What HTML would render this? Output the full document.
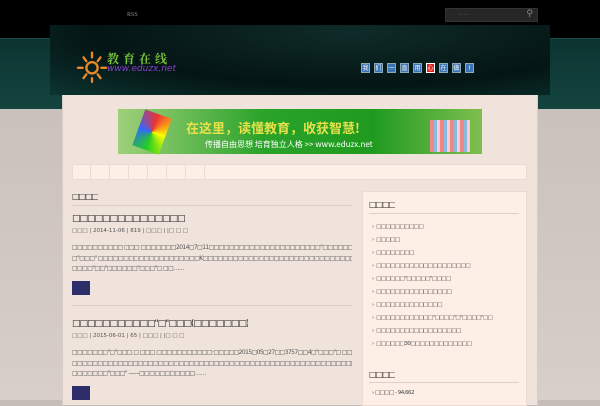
<!DOCTYPE html>
<html><head><meta charset="utf-8"><style>
*{margin:0;padding:0;box-sizing:border-box}
body{width:600px;height:400px;overflow:hidden;background:linear-gradient(#c6bcb8,#d0c7c2 250px,#d8cfca);font-family:"DejaVu Sans","Liberation Sans",sans-serif;position:relative;color:#333}
.abs{position:absolute}
.top{left:0;top:0;width:600px;height:38px;background:#000}
.band{left:0;top:38px;width:600px;height:71px;background:linear-gradient(#0c3431,#14443f);border-top:1px solid #1d4a45}
.head{left:50px;top:25px;width:500px;height:70px;background:radial-gradient(ellipse at 60% 10%,#0f2b29,#041514 60%,#0b3531);}
.page{left:62px;top:95px;width:476px;height:310px;background:#efe3dc;border-left:1px solid #d8ccc5;border-right:1px solid #d8ccc5}
.t{font-size:7px;color:#555;line-height:10.5px;white-space:nowrap;overflow:hidden}
.p{font-size:6px;letter-spacing:-0.6px;color:#555;line-height:10.5px;white-space:nowrap;overflow:hidden;width:280px}
.line{height:1px;background:#dcd0c8}
.tag{display:inline-block;width:9px;height:10px;background:#3a74b4;margin-right:4px;color:#fff;font-size:6px;text-align:center;line-height:10px;border:1px solid #8ab}
.sb{font-size:5.5px;letter-spacing:-0.5px;line-height:13px;color:#444;white-space:nowrap}
</style></head><body>
<div class="abs top"></div>
<div class="abs" style="left:127px;top:12px;font-size:6px;color:#888;font-family:'Liberation Serif',serif">RSS</div>
<div class="abs" style="left:445px;top:8px;width:93px;height:14px;background:#262626;border:1px solid #333"><span style="position:absolute;left:12px;top:1px;font-size:6px;color:#666">......</span><span style="position:absolute;right:4px;top:0;color:#888;font-size:9px">⚲</span></div>
<div class="abs band"></div>
<div class="abs head"></div>
<svg class="abs" style="left:76px;top:44px" width="32" height="40" viewBox="0 0 34 42">
<g stroke="#e8892a" stroke-width="2.5" stroke-linecap="round" fill="none"><circle cx="17" cy="25" r="6"/><line x1="17" y1="9" x2="17" y2="14"/><line x1="8" y1="14" x2="11" y2="18"/><line x1="26" y1="14" x2="23" y2="18"/><line x1="2" y1="25" x2="7" y2="25"/><line x1="27" y1="25" x2="32" y2="25"/><line x1="8" y1="36" x2="11" y2="32"/><line x1="26" y1="36" x2="23" y2="32"/><line x1="17" y1="36" x2="17" y2="40"/></g></svg>
<div class="abs" style="left:107px;top:50px;font-size:12px;color:#7ac43a;letter-spacing:4px;font-family:'Noto Serif CJK SC',serif;font-weight:bold">教育在线</div>
<div class="abs" style="left:107px;top:64px;font-size:9px;color:#8a3fcf;font-style:italic">www.eduzx.net</div>
<div class="abs" style="left:361px;top:55px;white-space:nowrap"><span class="tag">我</span><span class="tag">们</span><span class="tag">一</span><span class="tag">直</span><span class="tag">用</span><span class="tag" style="background:#d22;border-color:#fff">心</span><span class="tag">在</span><span class="tag">做</span><span class="tag">!</span></div>
<div class="abs page"></div>
<div class="abs" style="left:118px;top:109px;width:364px;height:45px;background:linear-gradient(90deg,#9fd07a,#2aa32a 40%,#1f9a1f 70%,#7fbf4f)"></div>
<div class="abs" style="left:138px;top:113px;width:28px;height:38px;background:conic-gradient(#e33,#ff0,#2c2,#36f,#e33);transform:rotate(20deg)"></div>
<div class="abs" style="left:186px;top:118px;font-size:13px;color:#e8e24a;font-weight:bold;font-family:'Noto Sans CJK SC',sans-serif;white-space:nowrap">在这里，读懂教育，收获智慧!</div>
<div class="abs" style="left:205px;top:139px;font-size:8px;color:#fff;white-space:nowrap;font-family:'Noto Sans CJK SC',sans-serif">传播自由思想 培育独立人格 &gt;&gt; www.eduzx.net</div>
<div class="abs" style="left:430px;top:120px;width:40px;height:32px;background:repeating-linear-gradient(90deg,#e88,#e88 4px,#8bd 4px,#8bd 7px,#fcc 7px,#fcc 10px)"></div>
<div class="abs" style="left:72px;top:164px;width:455px;height:16px;background:#fdeee6;border:1px solid #eadad0"></div>
<div class="abs" style="left:72px;top:164px;height:16px;width:150px;background:repeating-linear-gradient(90deg,transparent 0 18px,#eadad0 18px 19px)"></div>
<div class="abs t" style="left:72px;top:192px;font-size:8px;letter-spacing:-1px;color:#222">□□□□</div>
<div class="abs line" style="left:72px;top:205px;width:280px"></div>
<div class="abs t" style="left:72px;top:212px;font-size:9px;letter-spacing:-1px;color:#222;line-height:14px">□□□□□□□□□□□□□□□</div>
<div class="abs t" style="left:72px;top:226px;font-size:5.5px">□□□ | 2014-11-06 | 819 | □□□ | |□ □ □</div>
<div class="abs p" style="left:72px;top:243px">□□□□□□□□□□ □□□ □□□□□□□2014□7□11□□□□□□□□□□□□□□□□□□□□□□"□□□□□□" □□□□□□□□□□□□□□□□□</div>
<div class="abs p" style="left:72px;top:253.5px">□"□□□" □□□□□□□□□□□□□□□□□□□□K□□□□□□□□□□□□□□□□□□□□□□□□□□□□□□□□□□□□□□□□□□□□□□□□□□□</div>
<div class="abs p" style="left:72px;top:264px">□□□□"□□"□□□□□□"□□□"□ □□……</div>
<div class="abs" style="left:72px;top:281px;width:18px;height:14px;background:#2d2d6a"></div>
<div class="abs line" style="left:72px;top:305px;width:280px"></div>
<div class="abs t" style="left:72px;top:317px;font-size:9px;letter-spacing:-1px;color:#222;line-height:14px">□□□□□□□□□□□"□"□□□(□□□□□□□)</div>
<div class="abs t" style="left:72px;top:331px;font-size:5.5px">□□□ | 2015-06-01 | 65 | □□□ | |□ □ □</div>
<div class="abs p" style="left:72px;top:348px">□□□□□□□"□"□□□ □ □□□ □□□□□□□□□□□·□□□□□2015□05□27□□3757□□4□"□□□"□ □□□□□□□□□□□</div>
<div class="abs p" style="left:72px;top:358.5px">□□□□□□□□□□□□□□□□□□□□□□□□□□□□□□□□□□□□□□□□□□□□□□□□□□□□□□□□□□□□□□□□□□□□□□□□□□□□□□□□□</div>
<div class="abs p" style="left:72px;top:369px">□□□□□□□"□□□" ——□□□□□□□□□□□……</div>
<div class="abs" style="left:72px;top:386px;width:18px;height:14px;background:#2d2d6a"></div>
<div class="abs" style="left:362px;top:191px;width:165px;height:215px;background:#fdeee6;border:1px solid #eadad0"></div>
<div class="abs t" style="left:369px;top:200px;font-size:8px;letter-spacing:-1px;color:#222">□□□□</div>
<div class="abs line" style="left:369px;top:213px;width:150px"></div>
<div class="abs sb" style="left:372px;top:221px;white-space:pre">›  □□□□□□□□□□
›  □□□□□
›  □□□□□□□□
›  □□□□□□□□□□□□□□□□□□□□
›  □□□□□□"□□□□□"□□□□
›  □□□□□□□□□□□□□□□□
›  □□□□□□□□□□□□□□
›  □□□□□□□□□□□□"□□□□"□"□□□□"□□
›  □□□□□□□□□□□□□□□□□□
›  □□□□□□30□□□□□□□□□□□□□</div>
<div class="abs t" style="left:369px;top:370px;font-size:8px;letter-spacing:-1px;color:#222">□□□□</div>
<div class="abs line" style="left:369px;top:382px;width:150px"></div>
<div class="abs sb" style="left:372px;top:387px">›  □□□□ - 94,662</div>
</body></html>
